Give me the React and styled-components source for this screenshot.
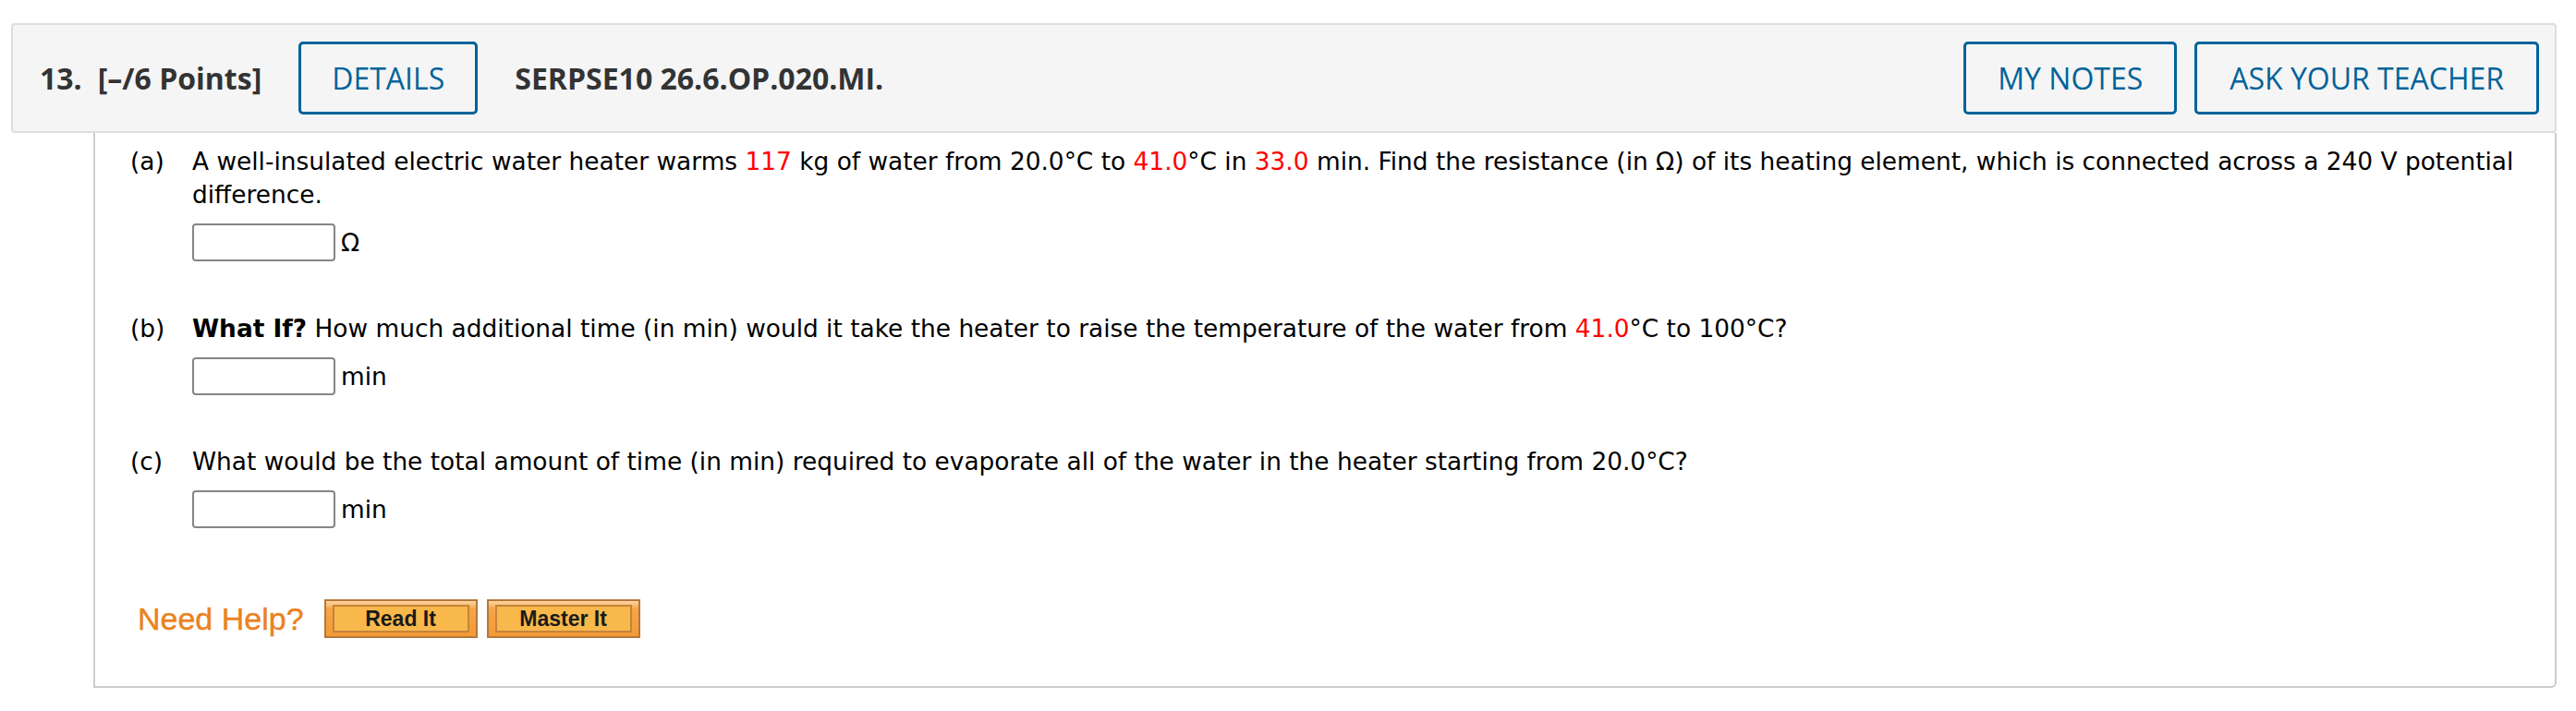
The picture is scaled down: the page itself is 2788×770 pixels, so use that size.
import React from "react";
import styled, { createGlobalStyle } from "styled-components";

const GlobalStyle = createGlobalStyle`
  body {
    margin: 0;
    background: #fff;
  }
`;

const Question = styled.div`
  margin: 25px 21px 0 12px;
`;

const Header = styled.div`
  display: flex;
  align-items: center;
  height: 119px;
  box-sizing: border-box;
  padding: 0 17px 0 29px;
  background: #f5f5f5;
  border: 2px solid #dedede;
  border-radius: 4px;
  font-family: "Open Sans", sans-serif;
`;

const HeadText = styled.span`
  font-size: 32px;
  font-weight: 700;
  color: #333;
  margin-left: ${(p) => p.$gap || 0}px;
  white-space: nowrap;
`;

const OutlineButton = styled.button`
  height: 79px;
  padding: 0 ${(p) => p.$pad || 32}px;
  margin-left: ${(p) => p.$gap || 0}px;
  background: transparent;
  border: 3px solid #00639a;
  border-radius: 5px;
  color: #00639a;
  font-family: "Open Sans", sans-serif;
  font-size: 32px;
  font-weight: 500;
  white-space: nowrap;
  cursor: pointer;
`;

const Spacer = styled.div`
  flex: 1;
`;

const Actions = styled.div`
  display: flex;
  gap: 19px;
`;

const Body = styled.div`
  margin-left: 89px;
  padding: 13px 25px 52px 38px;
  border: 2px solid #cccccc;
  border-top: none;
  border-radius: 0 0 6px 0;
  font-family: "DejaVu Sans", Verdana, sans-serif;
  font-size: 26.4px;
  line-height: 36px;
  color: #000;
`;

const Part = styled.div`
  display: grid;
  grid-template-columns: 67px 1fr;
  margin-bottom: ${(p) => p.$after}px;
`;

const Label = styled.div``;

const Red = styled.span`
  color: #ff0000;
`;

const Bold = styled.b`
  font-weight: 700;
`;

const AnswerRow = styled.div`
  display: flex;
  align-items: center;
  margin-top: 13px;
`;

const Input = styled.input`
  width: 155px;
  height: 41px;
  box-sizing: border-box;
  border: 2px solid #858585;
  border-radius: 4px;
  background: #fff;
`;

const Unit = styled.span`
  margin-left: 6px;
`;

const HelpRow = styled.div`
  display: flex;
  align-items: center;
  padding-left: 8px;
`;

const HelpTitle = styled.span`
  font-family: "Liberation Sans", Arial, sans-serif;
  font-size: 34px;
  color: #ea8220;
  margin-right: 22px;
  line-height: 1;
  -webkit-text-stroke: 0.4px #ea8220;
`;

const HelpButton = styled.button`
  width: 166px;
  height: 42px;
  margin-right: 10px;
  padding: 0;
  box-sizing: border-box;
  border: 2px solid #b5773b;
  background: linear-gradient(#fbd7a4 0, #f6a548 22%, #f39a36 100%);
  cursor: pointer;
  display: flex;
  align-items: center;
  justify-content: center;
`;

const HelpInner = styled.span`
  display: flex;
  align-items: center;
  justify-content: center;
  width: 148px;
  height: 30px;
  box-sizing: border-box;
  border: 2px solid #c4843d;
  background: #f9b84b;
  font-family: "Liberation Sans", Arial, sans-serif;
  font-weight: 700;
  font-size: 23px;
  color: #1a1a1a;
`;

export default function App() {
  return (
    <>
      <GlobalStyle />
      <Question>
        <Header>
          <HeadText>13.</HeadText>
          <HeadText $gap={17}>[–/6 Points]</HeadText>
          <OutlineButton $gap={40} $pad={33}>DETAILS</OutlineButton>
          <HeadText $gap={40}>SERPSE10 26.6.OP.020.MI.</HeadText>
          <Spacer />
          <Actions>
            <OutlineButton $pad={34}>MY NOTES</OutlineButton>
            <OutlineButton $pad={35}>ASK YOUR TEACHER</OutlineButton>
          </Actions>
        </Header>
        <Body>
          <Part $after={55}>
            <Label>(a)</Label>
            <div>
              A well-insulated electric water heater warms <Red>117</Red> kg of
              water from 20.0°C to <Red>41.0</Red>°C in <Red>33.0</Red> min. Find
              the resistance (in Ω) of its heating element, which is connected
              across a 240 V potential difference.
              <AnswerRow>
                <Input />
                <Unit>Ω</Unit>
              </AnswerRow>
            </div>
          </Part>
          <Part $after={54}>
            <Label>(b)</Label>
            <div>
              <Bold>What If?</Bold> How much additional time (in min) would it
              take the heater to raise the temperature of the water from{" "}
              <Red>41.0</Red>°C to 100°C?
              <AnswerRow>
                <Input />
                <Unit>min</Unit>
              </AnswerRow>
            </div>
          </Part>
          <Part $after={77}>
            <Label>(c)</Label>
            <div>
              What would be the total amount of time (in min) required to
              evaporate all of the water in the heater starting from 20.0°C?
              <AnswerRow>
                <Input />
                <Unit>min</Unit>
              </AnswerRow>
            </div>
          </Part>
          <HelpRow>
            <HelpTitle>Need Help?</HelpTitle>
            <HelpButton>
              <HelpInner>Read It</HelpInner>
            </HelpButton>
            <HelpButton>
              <HelpInner>Master It</HelpInner>
            </HelpButton>
          </HelpRow>
        </Body>
      </Question>
    </>
  );
}
